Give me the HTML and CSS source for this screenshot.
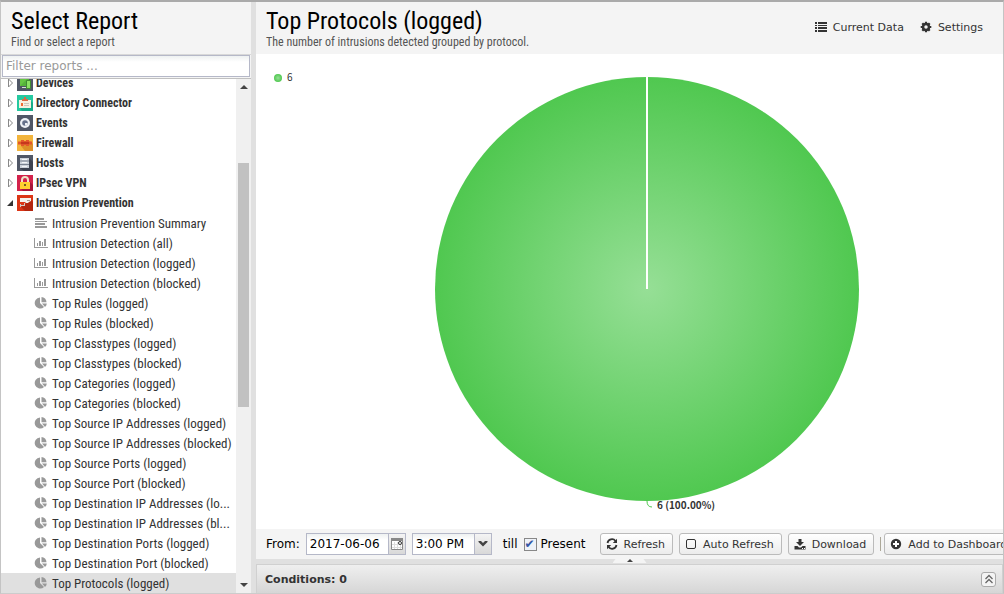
FILE: index.html
```
<!DOCTYPE html>
<html lang="en">
  <head>
    <meta charset="UTF-8" />
    <title>Reports</title>
    <link rel="stylesheet" href="styles.css">
  </head>
  <body>
    <!-- Icon sprite -->
    <svg class="sprite" aria-hidden="true">
      <symbol id="closed" viewBox="0 0 8 10"><path d="M2.500 1 L6.500 5 L2.500 9Z" fill="#fff" stroke="#888"/></symbol>
      <symbol id="open" viewBox="0 0 8 10"><path d="M7 2 V8 H1Z" fill="#333"/></symbol>
      <symbol id="devices" viewBox="0 0 16 16"><path fill="#505766" d="M0 0h16v16H0z"/><path fill="#66c644" d="M3 2h9v9H3z"/><path fill="#55b53a" d="M3 11l9-9v9z"/><path fill="#d8e6d4" d="M5 12h4v1H5z"/><path fill="#8be264" stroke="#408c31" d="M9.500 5.500h4v8h-4z"/></symbol>
      <symbol id="directory" viewBox="0 0 16 16"><path fill="#25c9a0" d="M0 0h16v16H0z"/><path fill="#18ac89" d="M13 5l3 3v8H5l-2-3z"/><path fill="#f5f0df" d="M2 5h12v8H2z"/><path fill="#da6943" d="M5 4h2V2h2v2h2v2H5z"/><path fill="#ef6b31" d="M4 8h2v3H4z"/><path fill="#c9c6ba" d="M7 8h5v1H7zm0 2h5v1H7z"/></symbol>
      <symbol id="events" viewBox="0 0 16 16"><path fill="#505766" d="M0 0h16v16H0z"/><circle cx="8" cy="8" r="5" fill="#eef1f5"/><circle cx="8" cy="8" r="2.800" fill="#66718a"/><path d="M8 5v3h2.500v2.500H8z" fill="#eef1f5"/></symbol>
      <symbol id="firewall" viewBox="0 0 16 16"><path fill="#f2b43c" d="M0 0h16v16H0z"/><path fill="#dd8f28" d="M13 6l3 3v7H8l-4-5z"/><path fill="#e3562a" d="M1 6.500h3V5h3v1h2V5h3v1.500h3v3h-3V11H9v-1H7v1H4V9.500H1z"/><path d="M4 8h8" stroke="#c5381d" stroke-width="2"/></symbol>
      <symbol id="hosts" viewBox="0 0 16 16"><path fill="#505766" d="M0 0h16v16H0z"/><path fill="#3d4351" d="M12 3l4 4v9H7l-4-3z"/><path fill="#ccd2da" d="M3 3h9v10H3z"/><path d="M3 6h9M3 9.500h9" stroke="#7b8391"/><path d="M5 4.500h5M5 7.500h5M5 11.500h5" stroke="#f4f5f8"/></symbol>
      <symbol id="vpn" viewBox="0 0 16 16"><path fill="#d3224b" d="M0 0h16v16H0z"/><path fill="#a81539" d="M13 7l3 3v6H6l-3-3z"/><path d="M5 8V5a3 3 0 0 1 6 0v3" fill="none" stroke="#eee3c7" stroke-width="2"/><path fill="#ffd22f" d="M3 7h10v7H3z"/><path fill="#755e24" d="M7 9h2v2H7z"/></symbol>
      <symbol id="intrusion" viewBox="0 0 16 16"><path fill="#dc3516" d="M0 0h16v16H0z"/><path fill="#b3260f" d="M14 5l2 2v9H8l-4-4z"/><path fill="#f5f2ed" d="M3 3h11v3l-2 1-1 1H9L8 7H3z"/><path fill="#d0c9c3" d="M3 9h1v1h3V8h1v3H4v1H3z"/><path fill="#a9988f" d="M10 5h3v1h-3z"/></symbol>
      <symbol id="lines" viewBox="0 0 14 12"><path fill="#999" d="M1 1h9v2H1zm0 3h12v1H1zm0 2h10v2H1zm0 3h12v2H1z"/></symbol>
      <symbol id="bars" viewBox="0 0 14 12"><path fill="#999" d="M0 1h1v9h13v1H0zM3 6h1v3H3zm2-2h2v5H5zm3 1h1v4H8zm2-3h2v7h-2z"/></symbol>
      <symbol id="pie" viewBox="0 0 14 12"><path fill="#999" d="M6 .5V6l4 4A5.500 5.500 0 1 1 6 .5z"/><path fill="#999" d="M7.500 0A5.300 5.300 0 0 1 12.500 5.200h-5zM8 6.500h4.800A5 5 0 0 1 11 10z"/></symbol>
      <symbol id="list" viewBox="0 0 12 12"><path fill="#333" d="M0 1h2v2H0zm3 0h9v2H3zM0 4h2v1H0zm3 0h9v1H3zM0 6h2v2H0zm3 0h9v2H3zM0 9h2v2H0zm3 0h9v2H3z"/></symbol>
      <symbol id="gear" viewBox="0 0 12 12"><g fill="none" stroke="#333"><circle cx="6" cy="6" r="3" stroke-width="2.500"/><path stroke-width="2.200" d="M6 .7v2M6 9.300v2M.7 6h2M9.300 6h2M2.300 2.300l1.300 1.300M8.400 8.400l1.300 1.300M9.700 2.300L8.400 3.600M3.600 8.400L2.300 9.700"/></g></symbol>
      <symbol id="refresh" viewBox="0 0 12 12"><path d="M1.500 5A4.500 4.500 0 0 1 9.500 3M10.500 7a4.500 4.500 0 0 1-8 2" fill="none" stroke="#333" stroke-width="1.800"/><path fill="#333" d="M11 .8V5H6.800zM1 11.200V7h4.200z"/></symbol>
      <symbol id="square" viewBox="0 0 12 12"><rect x="1.500" y="1.500" width="9" height="9" rx="1.500" fill="none" stroke="#333"/></symbol>
      <symbol id="download" viewBox="0 0 12 12"><path fill="#333" d="M4.500 1h3v3H10L6 8 2 4h2.500zM.5 8h3L5 9.500h2L8.500 8h3v3.500H.5z"/><path fill="#fff" d="M8 10h1v1H8zm2 0h1v1h-1z"/></symbol>
      <symbol id="plus" viewBox="0 0 12 12"><circle cx="6" cy="6" r="5.200" fill="#333"/><path d="M6 3v6M3 6h6" stroke="#fff" stroke-width="2"/></symbol>
      <symbol id="calendar" viewBox="0 0 12 12"><path fill="#fff" stroke="#888" d="M.5 1.500h11v10H.5z"/><path fill="#888" d="M0 0h12v3H0z"/><path d="M3.500 4v7M6.500 4v7M9.500 7v4M1 6.500h10M1 9.500h10" stroke="#ddd"/><circle cx="9" cy="5" r="1.500" fill="#fff" stroke="#333"/></symbol>
      <symbol id="arrow" viewBox="0 0 10 8"><path d="M0.500 1h2.500l2 2 2-2h2.500v1L5 6.500.5 2z" fill="#444"/></symbol>
      <symbol id="up" viewBox="0 0 8 4"><path d="M4 0l4 4H0z" fill="#444"/></symbol>
      <symbol id="down" viewBox="0 0 8 4"><path d="M0 0h8L4 4z" fill="#444"/></symbol>
      <symbol id="expand" viewBox="0 0 10 10"><path d="M1.500 5L5 1.500 8.500 5M1.500 9L5 5.500 8.500 9" fill="none" stroke="#666" stroke-width="1.300"/></symbol>
    </svg>

    <aside class="sidebar">
      <header class="title">
        <h1>Select Report</h1>
        <p>Find or select a report</p>
      </header>
      <div class="filter"><input type="text" placeholder="Filter reports ..." aria-label="Filter reports"></div>
      <div class="tree">
        <ul class="nodes">
          <li><a class="group" href="#"><svg class="toggle"><use href="#closed"/></svg><svg class="app"><use href="#devices"/></svg><span>Devices</span></a></li>
          <li><a class="group" href="#"><svg class="toggle"><use href="#closed"/></svg><svg class="app"><use href="#directory"/></svg><span>Directory Connector</span></a></li>
          <li><a class="group" href="#"><svg class="toggle"><use href="#closed"/></svg><svg class="app"><use href="#events"/></svg><span>Events</span></a></li>
          <li><a class="group" href="#"><svg class="toggle"><use href="#closed"/></svg><svg class="app"><use href="#firewall"/></svg><span>Firewall</span></a></li>
          <li><a class="group" href="#"><svg class="toggle"><use href="#closed"/></svg><svg class="app"><use href="#hosts"/></svg><span>Hosts</span></a></li>
          <li><a class="group" href="#"><svg class="toggle"><use href="#closed"/></svg><svg class="app"><use href="#vpn"/></svg><span>IPsec VPN</span></a></li>
          <li><a class="group" href="#"><svg class="toggle"><use href="#open"/></svg><svg class="app"><use href="#intrusion"/></svg><span>Intrusion Prevention</span></a>
            <ul>
              <li><a class="leaf" href="#"><svg><use href="#lines"/></svg><span>Intrusion Prevention Summary</span></a></li>
              <li><a class="leaf" href="#"><svg><use href="#bars"/></svg><span>Intrusion Detection (all)</span></a></li>
              <li><a class="leaf" href="#"><svg><use href="#bars"/></svg><span>Intrusion Detection (logged)</span></a></li>
              <li><a class="leaf" href="#"><svg><use href="#bars"/></svg><span>Intrusion Detection (blocked)</span></a></li>
              <li><a class="leaf" href="#"><svg><use href="#pie"/></svg><span>Top Rules (logged)</span></a></li>
              <li><a class="leaf" href="#"><svg><use href="#pie"/></svg><span>Top Rules (blocked)</span></a></li>
              <li><a class="leaf" href="#"><svg><use href="#pie"/></svg><span>Top Classtypes (logged)</span></a></li>
              <li><a class="leaf" href="#"><svg><use href="#pie"/></svg><span>Top Classtypes (blocked)</span></a></li>
              <li><a class="leaf" href="#"><svg><use href="#pie"/></svg><span>Top Categories (logged)</span></a></li>
              <li><a class="leaf" href="#"><svg><use href="#pie"/></svg><span>Top Categories (blocked)</span></a></li>
              <li><a class="leaf" href="#"><svg><use href="#pie"/></svg><span>Top Source IP Addresses (logged)</span></a></li>
              <li><a class="leaf" href="#"><svg><use href="#pie"/></svg><span>Top Source IP Addresses (blocked)</span></a></li>
              <li><a class="leaf" href="#"><svg><use href="#pie"/></svg><span>Top Source Ports (logged)</span></a></li>
              <li><a class="leaf" href="#"><svg><use href="#pie"/></svg><span>Top Source Port (blocked)</span></a></li>
              <li><a class="leaf" href="#"><svg><use href="#pie"/></svg><span>Top Destination IP Addresses (lo...</span></a></li>
              <li><a class="leaf" href="#"><svg><use href="#pie"/></svg><span>Top Destination IP Addresses (bl...</span></a></li>
              <li><a class="leaf" href="#"><svg><use href="#pie"/></svg><span>Top Destination Ports (logged)</span></a></li>
              <li><a class="leaf" href="#"><svg><use href="#pie"/></svg><span>Top Destination Port (blocked)</span></a></li>
              <li><a class="leaf selected" href="#"><svg><use href="#pie"/></svg><span>Top Protocols (logged)</span></a></li>
            </ul>
          </li>
        </ul>
        <div class="scrollbar">
          <svg><use href="#up"/></svg>
          <div class="track"><div class="thumb"></div></div>
          <svg><use href="#down"/></svg>
        </div>
      </div>
    </aside>

    <main class="report">
      <header class="title bar">
        <div>
          <h1>Top Protocols (logged)</h1>
          <p>The number of intrusions detected grouped by protocol.</p>
        </div>
        <nav class="actions">
          <button><svg><use href="#list"/></svg>Current Data</button>
          <button><svg><use href="#gear"/></svg>Settings</button>
        </nav>
      </header>

      <div class="chart">
        <svg viewBox="0 0 747 475" role="img" aria-label="Top protocols">
          <defs>
            <radialGradient id="fill">
              <stop offset="0" stop-color="#96df96"/>
              <stop offset="1" stop-color="#50c850"/>
            </radialGradient>
          </defs>
          <circle cx="22" cy="24" r="4" fill="url(#fill)"/>
          <text x="31" y="27">6</text>
          <circle cx="391" cy="235" r="212" fill="url(#fill)"/>
          <path d="M391 23v212" stroke="#fff" stroke-width="2"/>
          <path d="M391 447q0 6 5 6" fill="none" stroke="#50c850"/>
          <text class="slice" x="401" y="455">6 (100.00%)</text>
        </svg>
      </div>

      <div class="toolbar">
        <label for="from">From:</label>
        <span class="field date">
          <input type="text" id="from" value="2017-06-06">
          <button class="trigger" aria-label="Pick date"><svg><use href="#calendar"/></svg></button>
        </span>
        <span class="field time">
          <select aria-label="Time"><option>3:00 PM</option></select>
          <span class="trigger"><svg><use href="#arrow"/></svg></span>
        </span>
        <span class="till">till</span>
        <label class="present"><input type="checkbox" checked>Present</label>
        <button class="btn"><svg><use href="#refresh"/></svg>Refresh</button>
        <button class="btn"><svg><use href="#square"/></svg>Auto Refresh</button>
        <button class="btn"><svg><use href="#download"/></svg>Download</button>
        <span class="extra"><button class="btn"><svg><use href="#plus"/></svg>Add to Dashboard</button></span>
      </div>

      <div class="splitter"><span class="handle"><svg><use href="#up"/></svg></span></div>

      <footer class="conditions">
        <h2>Conditions: 0</h2>
        <button aria-label="Expand conditions"><svg><use href="#expand"/></svg></button>
      </footer>
    </main>
  </body>
</html>
```

FILE: styles.css
```
:root {
  --ui: "DejaVu Sans", sans-serif;
  --condensed: "Roboto Condensed", "Liberation Sans Narrow", "Roboto", sans-serif;
  --line: #c4c4c4;
}
* {
  box-sizing: border-box;
}
body {
  display: flex;
  gap: 5px;
  height: 100vh;
  margin: 0;
  overflow: hidden;
  background: #e0e0e0;
  border: 1px solid var(--line);
  border-top: 2px solid #aaa;
  border-bottom-color: #ccc;
  font-family: var(--ui);
  font-size: 12px;
  color: #333;
}
button {
  font: 11px var(--ui);
  color: #333;
  padding: 0;
  border: 0;
  background: none;
}
svg {
  flex: none;
}
ul {
  list-style: none;
  margin: 0;
  padding: 0;
}
.sprite {
  display: none;
}
.sidebar {
  display: flex;
  flex-direction: column;
  flex: none;
  width: 250px;
  background: #f4f4f4;
}
.title {
  height: 52px;
  padding: 5px 10px 0;
  background: #f4f4f4;
  font-family: var(--condensed);
}
.title h1 {
  margin: 0;
  font-size: 24px;
  line-height: 28px;
  font-weight: 400;
  color: #000;
}
.title p {
  margin: 0;
  font-size: 12px;
  line-height: 14px;
  color: #555;
}
.filter {
  padding: 0 1px 1px;
  border-top: 1px solid #d8d8d8;
  border-bottom: 1px solid #c0c0c0;
}
.filter input {
  display: block;
  width: 100%;
  height: 22px;
  padding: 0 3px;
  border: 1px solid #b5b8c8;
  background: linear-gradient(#eef1f1, #fff 6px);
  font: 12px var(--ui);
}
.filter input::placeholder {
  color: #999;
}
.tree {
  display: flex;
  flex: 1;
  min-height: 0;
  overflow: hidden;
  background: #fff;
}
.nodes {
  flex: 1;
  min-width: 0;
  margin-top: -6px;
}
.nodes a {
  display: flex;
  align-items: center;
  height: 20px;
  font-family: var(--condensed);
  font-size: 13px;
  color: #333;
  text-decoration: none;
  white-space: nowrap;
}
.nodes .group {
  gap: 3px;
  padding-left: 5px;
  font-size: 12px;
  font-weight: 700;
}
.toggle {
  width: 8px;
  height: 10px;
}
.app {
  width: 16px;
  height: 16px;
}
.leaf {
  gap: 4px;
  padding-left: 33px;
}
.leaf svg {
  width: 14px;
  height: 12px;
}
.selected {
  background: #e0e0e0;
}
.scrollbar {
  display: flex;
  flex-direction: column;
  align-items: center;
  width: 15px;
  padding: 6px 0;
  background: #f0f0f0;
}
.scrollbar svg {
  width: 8px;
  height: 4px;
}
.track {
  flex: 1;
  width: 11px;
  padding-top: 74px;
}
.thumb {
  height: 58%;
  background: #c1c1c1;
}
.report {
  display: flex;
  flex-direction: column;
  flex: 1;
  min-width: 0;
}
.bar {
  display: flex;
  justify-content: space-between;
}
.actions {
  display: flex;
  gap: 16px;
  height: 40px;
  padding-right: 10px;
}
.actions button {
  display: flex;
  align-items: center;
  gap: 6px;
}
.actions svg {
  width: 12px;
  height: 12px;
}
.chart {
  flex: 1;
  min-height: 0;
  background: #fff;
}
.chart svg {
  display: block;
  width: 100%;
  height: 100%;
}
.chart text {
  font: 10px "Noto Sans CJK SC", sans-serif;
  fill: #333;
}
.chart .slice {
  font-weight: 700;
}
.toolbar {
  display: flex;
  align-items: center;
  gap: 6px;
  height: 30px;
  padding-left: 10px;
  overflow: hidden;
  background: #f4f4f4;
  color: #000;
  white-space: nowrap;
}
.field {
  display: flex;
  flex: none;
  height: 22px;
  border: 1px solid #b5b8c8;
  background: linear-gradient(#eef1f1, #fff 6px);
}
.date {
  width: 100px;
}
.time {
  width: 80px;
}
.field input,
.field select {
  flex: 1;
  min-width: 0;
  padding: 0 3px;
  border: 0;
  background: none;
  appearance: none;
  font: 12px var(--ui);
  color: #000;
}
.trigger {
  display: flex;
  align-items: center;
  justify-content: center;
  flex: none;
  width: 17px;
  border-left: 1px solid #b5b8c8;
  background: linear-gradient(#f4f4f4, #d8d8d8);
  pointer-events: none;
}
.trigger svg {
  width: 12px;
  height: 12px;
}
.time svg {
  width: 10px;
  height: 8px;
}
.till {
  margin-left: 5px;
}
.present {
  display: flex;
  align-items: center;
  gap: 4px;
  margin-right: 8px;
}
.present input {
  width: 13px;
  height: 13px;
  margin: 0;
  appearance: none;
  border: 1px solid #888;
  background: #eef2f8;
}
.present input:checked::before {
  content: "✔";
  display: block;
  font: 12px/11px var(--ui);
  color: #3557a5;
}
.btn {
  display: flex;
  align-items: center;
  gap: 6px;
  flex: none;
  height: 22px;
  padding: 0 7px 0 5px;
  border: 1px solid #bbb;
  border-radius: 3px;
  background: linear-gradient(#fff, #ececec);
}
.btn svg {
  width: 12px;
  height: 12px;
}
.extra {
  display: flex;
  flex: none;
  gap: 3px;
  align-items: center;
}
.extra::before {
  content: "";
  width: 1px;
  height: 14px;
  background: #aca899;
}
.splitter {
  display: flex;
  justify-content: center;
  height: 5px;
}
.handle {
  display: flex;
  justify-content: center;
  width: 34px;
  height: 4px;
  background: #f4f4f4;
  clip-path: polygon(3px 0, 31px 0, 100% 100%, 0 100%);
}
.handle svg {
  width: 6px;
  height: 3px;
}
.conditions {
  display: flex;
  align-items: center;
  justify-content: space-between;
  height: 29px;
  padding: 0 6px 0 8px;
  border: 1px solid #d0d0d0;
  border-bottom: 0;
  background: linear-gradient(#efefef, #d6d6d6);
}
.conditions h2 {
  margin: 0;
  font-size: 11px;
}
.conditions button {
  display: flex;
  align-items: center;
  justify-content: center;
  width: 15px;
  height: 15px;
  border: 1px solid #aaa;
  border-radius: 3px;
  background: #f4f4f4;
}
.conditions svg {
  width: 10px;
  height: 10px;
}
```
